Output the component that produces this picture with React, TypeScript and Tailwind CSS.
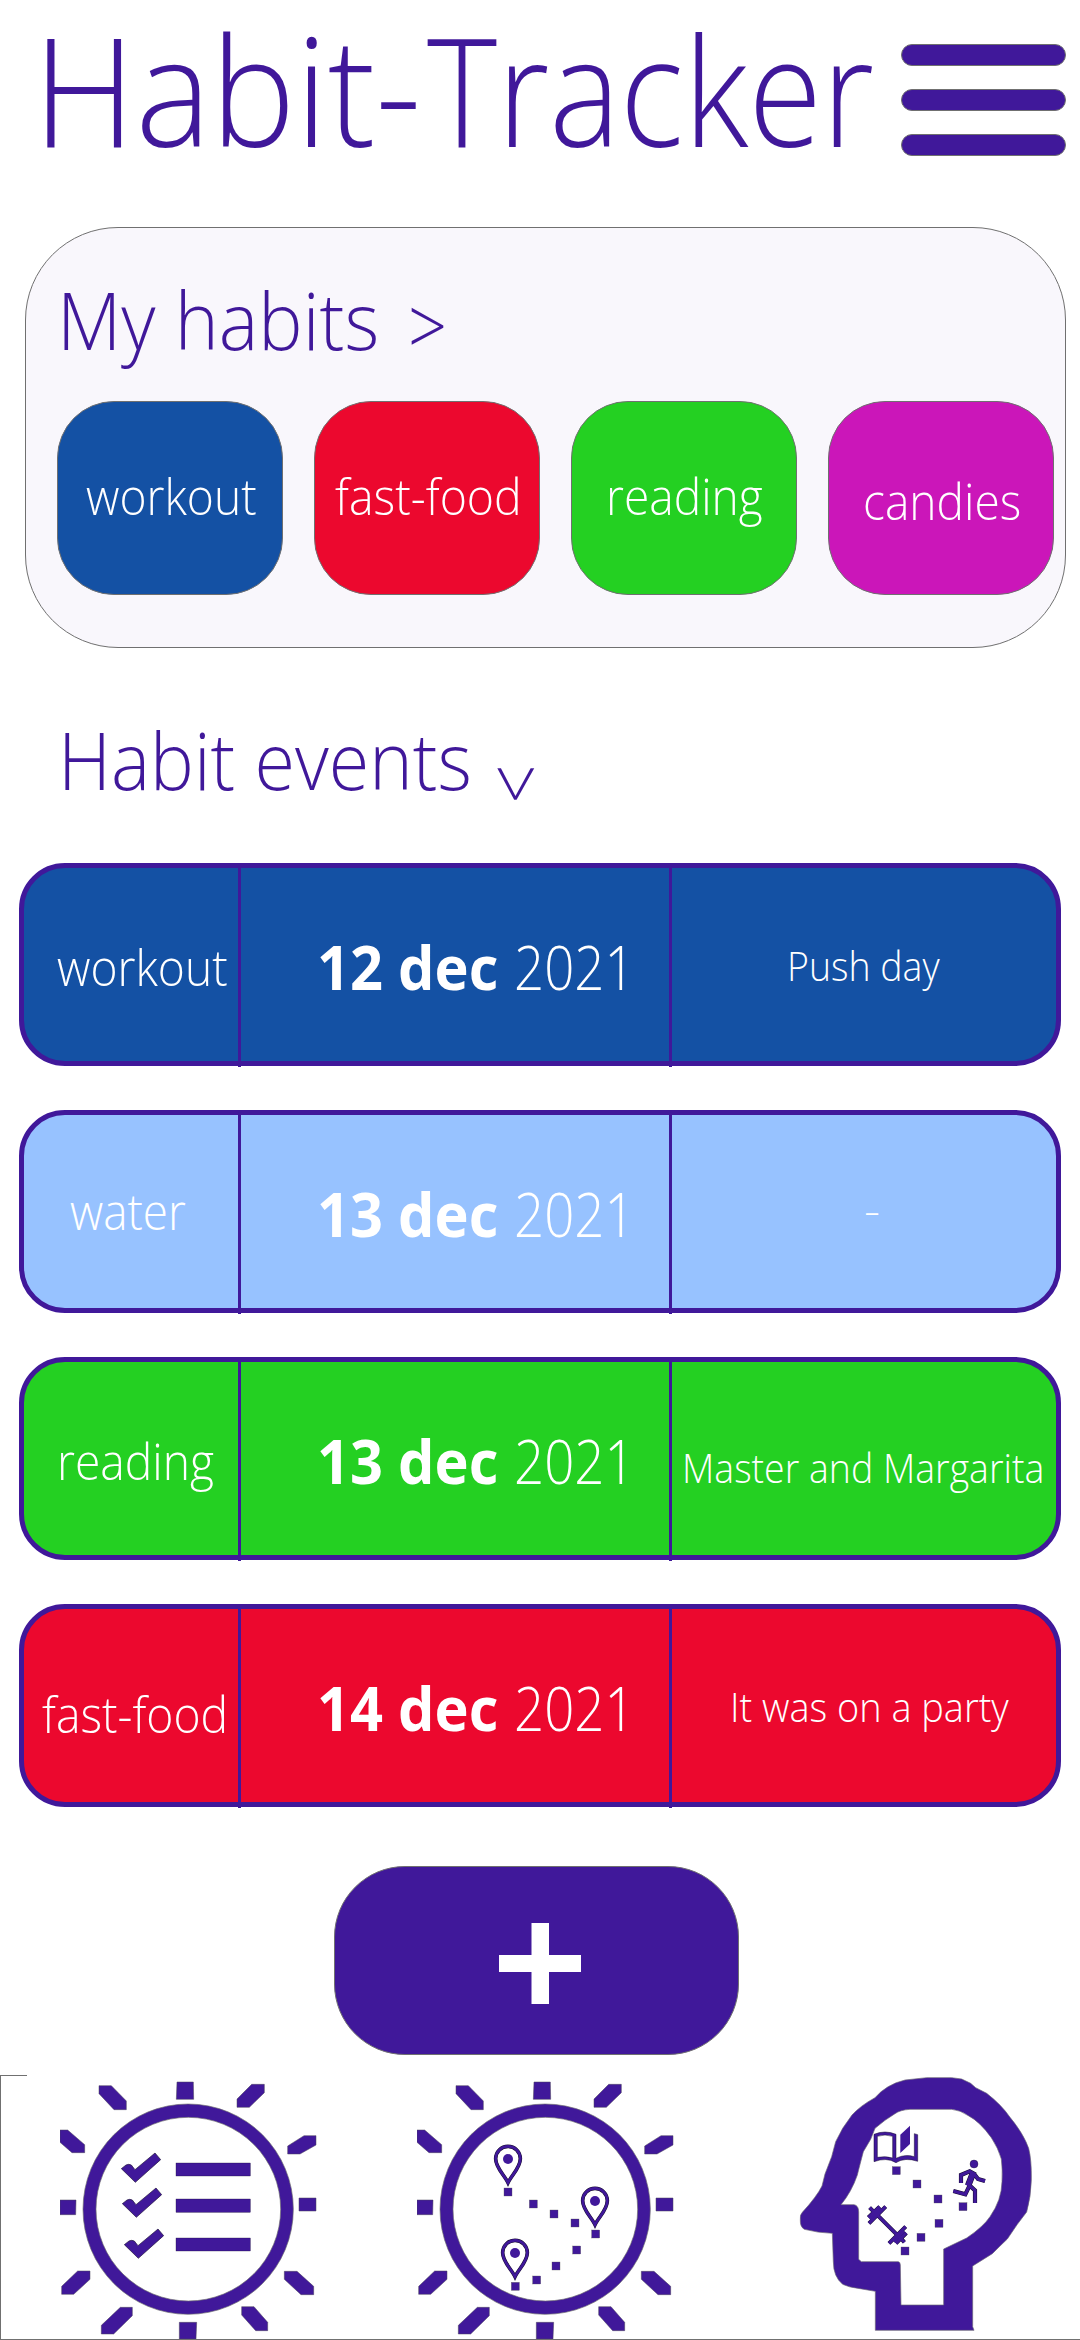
import type { ReactNode } from "react";

const habits = [
  { name: "workout", tile: "bg-[#1451a4] pl-[28px] pt-[64px]", text: "scale-x-[.924]" },
  { name: "fast-food", tile: "bg-[#ec082e] pl-[20px] pt-[64px]", text: "scale-x-[.929]" },
  { name: "reading", tile: "bg-[#24d022] pl-[34px] pt-[64px]", text: "scale-x-[.922]" },
  { name: "candies", tile: "bg-[#cb16b9] pl-[34px] pt-[69px]", text: "scale-x-[.922]" },
];

const events = [
  {
    color: "bg-[#1451a4]",
    name: "workout",
    nameCell: "pl-[33px] pt-[69px]",
    nameText: "scale-x-[.924]",
    day: "12 dec",
    note: "Push day",
    noteCell: "pl-[115px] pt-[68px]",
    noteText: "scale-x-[.936]",
  },
  {
    color: "bg-[#97c2ff]",
    name: "water",
    nameCell: "pl-[46px] pt-[66px]",
    nameText: "scale-x-[.918]",
    day: "13 dec",
    note: "-",
    noteCell: "pl-[192px] pt-[65px]",
    noteText: "scale-x-[1.25]",
  },
  {
    color: "bg-[#24d022]",
    name: "reading",
    nameCell: "pl-[33px] pt-[69px]",
    nameText: "scale-x-[.924]",
    day: "13 dec",
    note: "Master and Margarita",
    noteCell: "pl-[10px] pt-[76px]",
    noteText: "scale-x-[.936]",
  },
  {
    color: "bg-[#ec082e]",
    name: "fast-food",
    nameCell: "pl-[18px] pt-[75px]",
    nameText: "scale-x-[.926]",
    day: "14 dec",
    note: "It was on a party",
    noteCell: "pl-[58px] pt-[68px]",
    noteText: "scale-x-[.947]",
  },
];

function Divider() {
  return <div className="z-10 -mb-[6px] w-[3px] shrink-0 bg-[#40189a]" />;
}

const rays = [
  "297,77 334,77 379,123 379,149 342,149 297,101",
  "531,66 580,66 581,118 529,118",
  "755,73 793,73 793,98 748,142 711,142 711,117",
  "180,210 203,210 254,254 254,278 216,278 180,247",
  "912,227 948,227 948,255 900,282 863,282 863,258",
  "180,420 228,420 227,464 180,464",
  "897,414 948,414 948,453 897,453",
  "233,633 270,633 270,658 221,703 185,703 185,679",
  "853,634 891,634 941,679 941,704 903,704 853,658",
  "361,742 397,742 397,767 341,822 304,822 304,796",
  "725,740 762,740 803,787 803,812 767,812 725,765",
  "538,787 590,787 588,837 538,837",
];

function SunBadge({ children }: { children: ReactNode }) {
  return (
    <svg className="h-[259px] w-[257px] shrink-0" viewBox="180 60 771 777" fill="#40189a">
      <g stroke="#4a4458" strokeWidth="1.5">
        {rays.map((points) => (
          <polygon key={points} points={points} />
        ))}
      </g>
      <path
        fillRule="evenodd"
        stroke="#707070"
        strokeWidth="2"
        d="M249 447.500A315.500 315.500 0 1 1 880 447.500A315.500 315.500 0 1 1 249 447.500ZM288 447.500A277 275.500 0 1 0 842 447.500A277 275.500 0 1 0 288 447.500Z"
      />
      {children}
    </svg>
  );
}

function Check({ x, y }: { x: number; y: number }) {
  return (
    <path
      transform={`translate(${x} ${y})`}
      stroke="#1d1038"
      strokeWidth="2"
      d="M0 47L14 36Q22 32 30 36L41 50L101 0L118 20L42 88Z"
    />
  );
}

function Pin({ x, y }: { x: number; y: number }) {
  const outline = "M0 71C-11 48 -37 26 -37 -1A37 37 0 0 1 37 -1C37 26 11 48 0 71Z";
  return (
    <g transform={`translate(${x} ${y})`}>
      <path d={outline} fill="none" stroke="#150b2c" strokeWidth="11" />
      <path d={outline} fill="none" stroke="#40189a" strokeWidth="8" />
      <circle r="15" />
    </g>
  );
}

function Dots({ at }: { at: number[][] }) {
  return (
    <g stroke="#555" strokeWidth="1">
      {at.map(([x, y]) => (
        <rect key={`${x}-${y}`} x={x - 12} y={y - 12} width="24" height="24" />
      ))}
    </g>
  );
}

function Runner() {
  return (
    <path d="M573 369V345L599 334L612 341L596 382L586 403L550 393M612 341L624 357L645 363M596 374L615 391V429M605 340L591 376" />
  );
}

function Dumbbell() {
  return (
    <path d="M320 463L383 526M347 440L297 490M329 440L295 472M333 446L301 478M407 500L357 550M409 519L378 550M402 513L371 544M299 443L314 458M389 530L403 547" />
  );
}

function HeadIcon() {
  return (
    <svg className="h-[259px] w-[240px] shrink-0" viewBox="81 60 720 777" overflow="visible" fill="#40189a">
      <path
        fillRule="evenodd"
        stroke="#6b6676"
        strokeWidth="2"
        d="M316 811V694L270 686Q235 682 218 673Q190 650 190 605L187 520Q145 519 103 508Q90 500 91 480Q89 465 97 457Q140 410 156 378L165 342L185 290L197 245L218 205L246 165Q270 138 315 113Q350 73 405 60L470 53H545L575 57L602 70L617 83L650 100Q695 135 720 172Q760 220 776 265Q785 300 784 360Q783 410 770 456L742 493L712 537Q690 558 667 581L608 618V800L612 811ZM393 735H521V567L590 534Q640 500 660 470Q695 420 696 365Q698 330 694 297Q685 265 664 233Q630 185 595 167Q570 150 545 148H420Q390 150 375 161L345 181L315 205L302 238L280 275Q268 320 262 345Q245 395 213 434H252Q266 436 266 456V598L274 605H385Q391 606 391 615Z"
      />
      <g fill="none" stroke="#150b2c" strokeWidth="12.500">
        <Runner />
      </g>
      <g fill="none" stroke="#40189a" strokeWidth="9.500">
        <Runner />
      </g>
      <circle cx="612" cy="312" r="12" stroke="#150b2c" strokeWidth="1" />
      <g fill="none" stroke="#150b2c" strokeWidth="12">
        <Dumbbell />
      </g>
      <g fill="none" stroke="#40189a" strokeWidth="9">
        <Dumbbell />
      </g>
      <path
        stroke="#150b2c"
        strokeWidth="1.500"
        fillRule="evenodd"
        d="M312 223Q345 209 378 223V295Q405 281 433 290V221L443 224V304Q405 291 378 308Q350 291 312 305ZM322 229V292Q347 287 368 294V229Q345 221 322 229Z"
      />
      <polygon points="391,224 420,197 420,252 391,279" />
      <Dots at={[[379, 332], [441, 372], [504, 417], [579, 440], [507, 490], [453, 532], [405, 573]]} />
    </svg>
  );
}

export default function App() {
  return (
    <div className="flex h-[2340px] w-[1080px] flex-col overflow-hidden bg-white font-['Open_Sans',sans-serif] font-light whitespace-nowrap text-[#40189a]">
      <header className="flex h-[227px] shrink-0 items-start justify-between pr-[14px] pl-[33px]">
        <h1 className="mt-[13px] flex w-[850px] text-[151px] leading-[151px]">
          <span className="-mr-[18px] w-max origin-left scale-x-[.943]">Habit-</span>
          <span className="w-max origin-left scale-x-[.886]">Tracker</span>
        </h1>
        <button className="mt-[44px] flex flex-col gap-[23px]" aria-label="Menu">
          <span className="h-[22px] w-[165px] rounded-[11px] border border-[#707070] bg-[#40189a]" />
          <span className="h-[22px] w-[165px] rounded-[11px] border border-[#707070] bg-[#40189a]" />
          <span className="h-[22px] w-[165px] rounded-[11px] border border-[#707070] bg-[#40189a]" />
        </button>
      </header>

      <section className="ml-[25px] h-[421px] w-[1041px] shrink-0 rounded-[93px] border border-[#707070] bg-[#f9f7fc] pt-[52px] pl-[31px]">
        <h2 className="flex text-[79px] leading-[80px]">
          <span className="w-[351px] origin-left scale-x-[.943]">My habits</span>
          <span className="mt-[5px] -mb-[5px] origin-left scale-x-[.865]">&gt;</span>
        </h2>
        <div className="mt-[41px] flex gap-[31px]">
          {habits.map((h) => (
            <div
              key={h.name}
              className={`h-[194px] w-[226px] shrink-0 rounded-[57px] border border-[#707070] text-[50px] leading-[60px] text-white ${h.tile}`}
            >
              <span className={`block w-max origin-left ${h.text}`}>{h.name}</span>
            </div>
          ))}
        </div>
      </section>

      <h2 className="mt-[72px] flex shrink-0 pl-[58px] text-[79px] leading-[80px]">
        <span className="w-[436px] origin-left scale-x-[.933]">Habit events</span>
        <span className="mt-[24px] scale-x-[.865] rotate-90">&gt;</span>
      </h2>

      <main className="mt-[39px] flex shrink-0 flex-col gap-[44px] pl-[19px]">
        {events.map((e) => (
          <article
            key={e.name}
            className={`flex h-[203px] w-[1042px] rounded-[46px] border-[5px] border-[#40189a] leading-[60px] text-white ${e.color}`}
          >
            <div className={`w-[214px] text-[50px] ${e.nameCell}`}>
              <span className={`block w-max origin-left ${e.nameText}`}>{e.name}</span>
            </div>
            <Divider />
            <div className="flex w-[428px] pt-[69px] pl-[76px] text-[60px]">
              <span className="w-[197px] origin-left scale-x-[.962] font-bold">{e.day}</span>
              <span className="origin-left scale-x-[.88]">2021</span>
            </div>
            <Divider />
            <div className={`w-[384px] text-[40px] ${e.noteCell}`}>
              <span className={`block w-max origin-left ${e.noteText}`}>{e.note}</span>
            </div>
          </article>
        ))}
      </main>

      <button
        className="mt-[59px] ml-[334px] flex h-[189px] w-[405px] shrink-0 rounded-[71px] border border-[#707070] bg-[#40189a] pt-[56px] pl-[164px]"
        aria-label="Add"
      >
        <svg className="h-[81px] w-[82px]" viewBox="0 0 82 81" fill="#fff">
          <path d="M32.500 0H50V32H82V49H50V81H32.500V49H0V32H32.500Z" />
        </svg>
      </button>

      <nav className="mt-[20px] flex h-[265px] shrink-0 flex-col border-b border-l border-[#707070]">
        <div className="h-px w-[26px] shrink-0 bg-[#707070]" />
        <div className="mt-[4px] flex pl-[59px]">
          <SunBadge>
            <g stroke="#1d1038" strokeWidth="1">
              <rect x="528" y="309" width="223" height="39" />
              <rect x="528" y="417" width="223" height="40" />
              <rect x="528" y="534" width="223" height="39" />
            </g>
            <Check x={364} y={279} />
            <Check x={367} y={384} />
            <Check x={373} y={507} />
          </SunBadge>
          <div className="ml-[100px]">
            <SunBadge>
              <g transform="translate(99)">
                <Pin x={354} y={297} />
                <Pin x={615} y={423} />
                <Pin x={375} y={579} />
                <Dots
                  at={[[354, 396], [430, 432], [492, 462], [555, 489], [617, 522], [560, 570], [498, 618], [440, 660], [376, 679]]}
                />
              </g>
            </SunBadge>
          </div>
          <div className="ml-[123px]">
            <HeadIcon />
          </div>
        </div>
      </nav>
    </div>
  );
}
